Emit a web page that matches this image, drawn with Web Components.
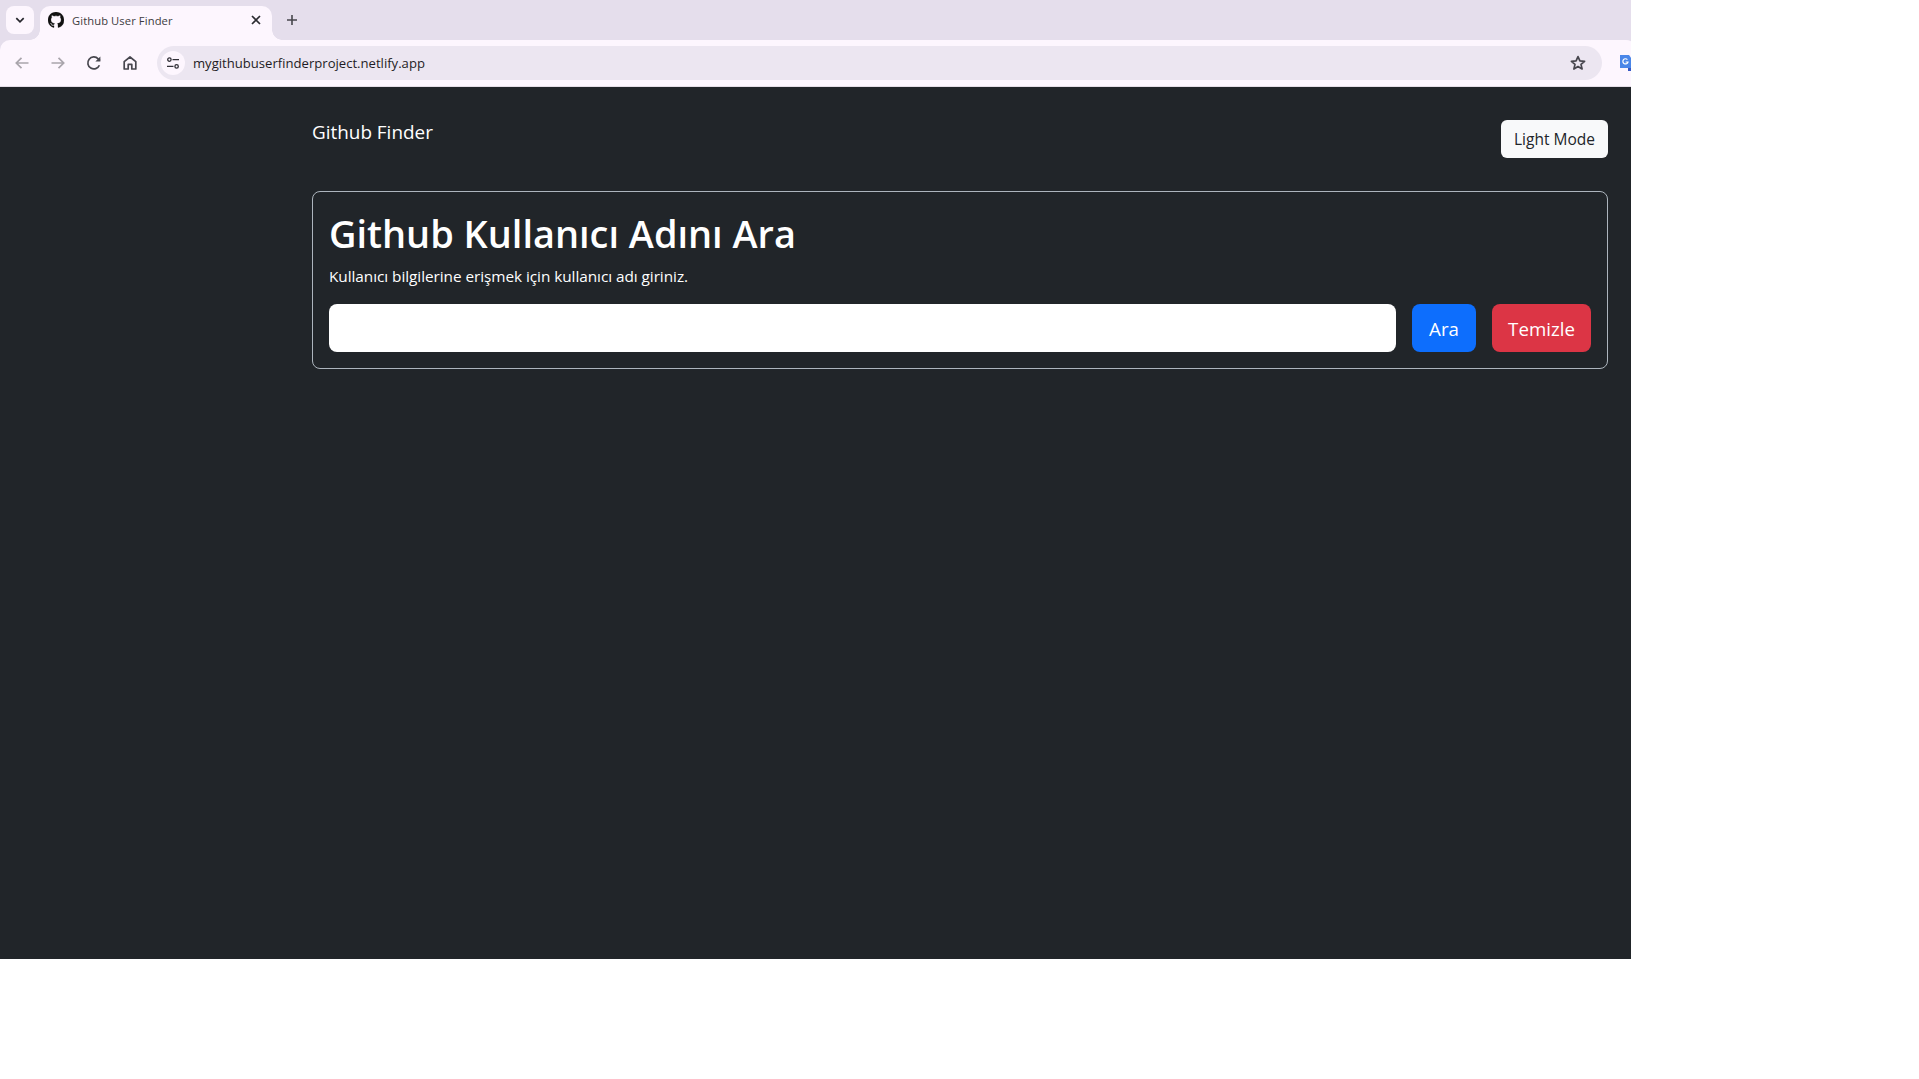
<!DOCTYPE html>
<html lang="tr"><head><meta charset="utf-8"><title>Github User Finder</title>
<style>html,body{margin:0;padding:0;background:#fff;height:100%;overflow:hidden}body{font-family:"Open Sans","Liberation Sans",sans-serif}</style></head>
<body>
<browser-window>
  <browser-tabs slot="tabs"></browser-tabs>
  <browser-toolbar slot="toolbar"></browser-toolbar>
  <finder-app></finder-app>
</browser-window>
<script>
function def(name,html){customElements.define(name,class extends HTMLElement{constructor(){super();this.attachShadow({mode:'open'}).innerHTML=html}})}
def('browser-window',`<style>:host{display:flex;flex-direction:column;width:1631px;height:959px;overflow:hidden;background:#212529}
.c{flex:1;min-height:0;display:flex;flex-direction:column}</style><slot name="tabs"></slot><slot name="toolbar"></slot><div class="c"><slot></slot></div>`);
def('browser-tabs',`<style>:host{display:flex;height:40px;flex:none;background:#e5deec;box-sizing:border-box;padding:6px 0 0 6px;font-family:"Open Sans",sans-serif}
.srch{width:28px;height:28px;border-radius:8px;background:#fdf6fe;display:flex;align-items:center;justify-content:center;margin-right:6px}
.tab{position:relative;width:232px;height:34px;background:#fdf6fe;border-radius:10px 10px 0 0;display:flex;align-items:center;box-sizing:border-box;padding:0 0 6px 8px}
.tab::before,.tab::after{content:"";position:absolute;bottom:0;width:10px;height:10px}
.tab::before{left:-10px;background:radial-gradient(circle at 0 0,transparent 9.5px,#fdf6fe 10px)}
.tab::after{right:-10px;background:radial-gradient(circle at 100% 0,transparent 9.5px,#fdf6fe 10px)}
.t{font-size:11.2px;color:#3b3b40;margin-left:8px;flex:1;white-space:nowrap;letter-spacing:.1px}
.x{width:16px;height:16px;margin-right:8px;display:block}
.plus{width:16px;height:16px;margin:6px 0 0 12px}
svg{display:block;flex:none}</style>
<div class="srch"><svg width="12" height="12" viewBox="0 0 12 12"><path d="M2.3 4.2 6 7.8l3.7-3.6" fill="none" stroke="#26262c" stroke-width="1.7"/></svg></div>
<div class="tab"><svg width="16" height="16" viewBox="0 0 16 16"><path fill="#111" stroke="#111" stroke-width=".3" d="M8 0C3.58 0 0 3.58 0 8c0 3.54 2.29 6.53 5.47 7.59.4.07.55-.17.55-.38 0-.19-.01-.82-.01-1.49-2.01.37-2.53-.49-2.69-.94-.09-.23-.48-.94-.82-1.13-.28-.15-.68-.52-.01-.53.63-.01 1.08.58 1.23.82.72 1.21 1.87.87 2.33.66.07-.52.28-.87.51-1.07-1.78-.2-3.64-.89-3.64-3.95 0-.87.31-1.59.82-2.15-.08-.2-.36-1.02.08-2.12 0 0 .67-.21 2.2.82.64-.18 1.32-.27 2-.27.68 0 1.36.09 2 .27 1.53-1.04 2.2-.82 2.2-.82.44 1.1.16 1.92.08 2.12.51.56.82 1.27.82 2.15 0 3.07-1.87 3.75-3.65 3.95.29.25.54.73.54 1.48 0 1.07-.01 1.93-.01 2.2 0 .21.15.46.55.38A8.013 8.013 0 0016 8c0-4.42-3.58-8-8-8z"/></svg>
<span class="t">Github User Finder</span>
<svg class="x" viewBox="0 0 16 16"><path d="m4 4 8 8M12 4l-8 8" stroke="#2b2b30" stroke-width="1.7" fill="none"/></svg></div>
<svg class="plus" viewBox="0 0 16 16"><path d="M8 3v10M3 8h10" stroke="#47464c" stroke-width="1.6" fill="none"/></svg>`);
def('browser-toolbar',`<style>:host{display:flex;align-items:center;height:47px;flex:none;box-sizing:border-box;background:#e5deec}
.bar{flex:1;height:47px;background:#fdf6fe;border-radius:10px 10px 0 0;border-bottom:1px solid #e4dde6;box-sizing:border-box;display:flex;align-items:center;padding:0 0 1px 13px}
.b{width:18px;height:18px;flex:none;margin-right:18px}
.omni{width:1445px;height:34px;border-radius:17px;background:#ece6f1;display:flex;align-items:center;box-sizing:border-box;padding:0 14px 0 4px;flex:none}
.site{width:24px;height:24px;border-radius:50%;background:#fdf6fe;display:flex;align-items:center;justify-content:center;flex:none;margin-right:8px}
.u{font-size:13.1px;color:#1e1c24;flex:1;white-space:nowrap}
.ext{width:16px;height:18px;margin-left:18px;flex:none}
svg{display:block}</style>
<div class="bar">
<svg class="b" viewBox="0 0 18 18"><path d="M15.5 9h-12M8.5 3.8 3.3 9l5.2 5.2" fill="none" stroke="#a9a5ac" stroke-width="1.7"/></svg>
<svg class="b" viewBox="0 0 18 18"><path d="M2.5 9h12M9.5 3.8 14.7 9l-5.2 5.2" fill="none" stroke="#a9a5ac" stroke-width="1.7"/></svg>
<svg class="b" viewBox="0 0 18 18"><path d="M14.4 11.2A6 6 0 1 1 13.2 4.8L15 6.5" fill="none" stroke="#47464e" stroke-width="1.7"/><path d="M15.4 2.6v5h-5z" fill="#47464e"/></svg>
<svg class="b" viewBox="0 0 18 18"><path d="M3.2 15V7.6L9 3l5.8 4.6V15h-4v-4.6H7.2V15z" fill="none" stroke="#47464e" stroke-width="1.7" stroke-linejoin="round"/></svg>
<div class="omni"><div class="site"><svg width="14" height="14" viewBox="0 0 14 14"><circle cx="3.4" cy="3.6" r="1.7" fill="none" stroke="#302f36" stroke-width="1.3"/><path d="M6.5 3.6h6.5M1 10.4h6.5" stroke="#302f36" stroke-width="1.4"/><circle cx="10.6" cy="10.4" r="1.7" fill="none" stroke="#302f36" stroke-width="1.3"/></svg></div>
<span class="u">mygithubuserfinderproject.netlify.app</span>
<svg width="18" height="18" viewBox="0 0 18 18" style="margin-right:1px"><path d="m9 2.6 1.9 4.3 4.7.4-3.6 3.1 1.1 4.6L9 12.6 4.9 15l1.1-4.6-3.6-3.1 4.7-.4z" fill="none" stroke="#47464e" stroke-width="1.7" stroke-linejoin="round"/></svg></div>
<svg class="ext" viewBox="0 0 16 18"><path d="M0 1h9l3 4v9H0z" fill="#4a86e8"/><path d="M8 14h5v3H8z" fill="#3557c4"/><path d="M7.4 5.6A2.6 2.6 0 1 0 8 8H5.6" fill="none" stroke="#fff" stroke-width="1.2"/></svg>
</div>`);
def('finder-app',`<style>:host{display:block;flex:1;background:#212529;color:#fff;padding:33px 23px 0 312px;font-family:"Open Sans",sans-serif}
nav{display:flex;justify-content:space-between;align-items:flex-start;height:38px;margin-bottom:33px}
.brand{font-size:18.9px;line-height:24px}
.mode{height:38px;width:107px;border:0;padding:0;border-radius:6px;background:#f8f9fa;color:#212529;font:15.5px "Open Sans",sans-serif}
.card{border:1px solid #adb5bd;border-radius:8px;padding:17px 16px 16px;height:178px;box-sizing:border-box}
h1{margin:0;font-size:37.9px;line-height:48px;font-weight:600}
p{margin:7px 0 0;font-size:15.35px;line-height:24px;letter-spacing:-.05px}
form{display:flex;gap:16px;margin-top:16px}
input{flex:1;min-width:0;height:48px;box-sizing:border-box;border:0;border-radius:8px;background:#fff;padding:0 16px;margin:0}
button.l{height:48px;border:0;border-radius:8px;color:#fff;font:18.7px "Open Sans",sans-serif;padding:0}
.a{width:64px;background:#0d6efd}.t{width:99px;background:#dc3545}
</style>
<nav><span class="brand">Github Finder</span><button class="mode">Light Mode</button></nav>
<section class="card"><h1>Github Kullanıcı Adını Ara</h1><p>Kullanıcı bilgilerine erişmek için kullanıcı adı giriniz.</p>
<form onsubmit="return false"><input type="text" aria-label="Kullanıcı adı"><button class="l a">Ara</button><button class="l t">Temizle</button></form></section>`);
</script>
</body></html>
